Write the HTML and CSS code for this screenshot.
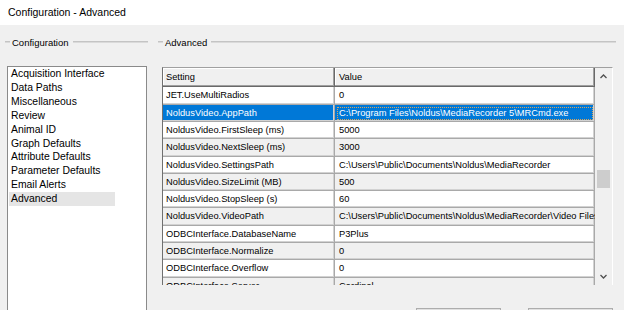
FILE: index.html
```html
<!DOCTYPE html>
<html lang="en">
<head>
  <meta charset="UTF-8" />
  <title>Configuration - Advanced</title>
  <link rel="stylesheet" href="styles.css">
</head>
<body>
  <div class="titlebar">Configuration - Advanced</div>
  <div class="main">
    <section class="group group-nav">
      <div class="group-head"><span>Configuration</span></div>
      <ul class="listbox">
        <li>Acquisition Interface</li>
        <li>Data Paths</li>
        <li>Miscellaneous</li>
        <li>Review</li>
        <li>Animal ID</li>
        <li>Graph Defaults</li>
        <li>Attribute Defaults</li>
        <li>Parameter Defaults</li>
        <li>Email Alerts</li>
        <li class="selected">Advanced</li>
      </ul>
    </section>

    <section class="group group-adv">
      <div class="group-head"><span>Advanced</span></div>
      <div class="grid">
        <div class="table">
          <div class="row head"><div class="cell">Setting</div><div class="cell">Value</div></div>
          <div class="row"><div class="cell">JET.UseMultiRadios</div><div class="cell">0</div></div>
          <div class="row sel"><div class="cell">NoldusVideo.AppPath</div><div class="cell focus">C:\Program Files\Noldus\MediaRecorder 5\MRCmd.exe</div></div>
          <div class="row"><div class="cell">NoldusVideo.FirstSleep (ms)</div><div class="cell">5000</div></div>
          <div class="row alt"><div class="cell">NoldusVideo.NextSleep (ms)</div><div class="cell">3000</div></div>
          <div class="row"><div class="cell">NoldusVideo.SettingsPath</div><div class="cell">C:\Users\Public\Documents\Noldus\MediaRecorder</div></div>
          <div class="row alt"><div class="cell">NoldusVideo.SizeLimit (MB)</div><div class="cell">500</div></div>
          <div class="row"><div class="cell">NoldusVideo.StopSleep (s)</div><div class="cell">60</div></div>
          <div class="row alt"><div class="cell">NoldusVideo.VideoPath</div><div class="cell">C:\Users\Public\Documents\Noldus\MediaRecorder\Video Files</div></div>
          <div class="row"><div class="cell">ODBCInterface.DatabaseName</div><div class="cell">P3Plus</div></div>
          <div class="row alt"><div class="cell">ODBCInterface.Normalize</div><div class="cell">0</div></div>
          <div class="row"><div class="cell">ODBCInterface.Overflow</div><div class="cell">0</div></div>
          <div class="row alt"><div class="cell">ODBCInterface.Server</div><div class="cell">Cardinal</div></div>
        </div>
        <div class="scrollbar">
          <div class="arrow">
            <svg width="7" height="5" viewBox="0 0 7 5"><polyline points="0.5,4 3.5,1 6.5,4" fill="none" stroke="#505050" stroke-width="1.3"/></svg>
          </div>
          <div class="track"><div class="thumb"></div></div>
          <div class="arrow">
            <svg width="7" height="5" viewBox="0 0 7 5"><polyline points="0.5,1 3.5,4 6.5,1" fill="none" stroke="#505050" stroke-width="1.3"/></svg>
          </div>
        </div>
      </div>
      <div class="buttons">
        <button class="btn">OK</button>
        <button class="btn">Cancel</button>
      </div>
    </section>
  </div>
</body>
</html>
```

FILE: styles.css
```css
html, body {
  margin: 0;
  width: 624px;
  height: 310px;
  overflow: hidden;
}
body {
  background: #f0f0f0;
  font-family: "Liberation Sans", Arial, sans-serif;
  color: #000;
}
.titlebar {
  height: 25px;
  line-height: 25px;
  padding-left: 8px;
  background: #fff;
  font-size: 10.5px;
}
.main {
  display: flex;
  gap: 10px;
  padding: 10px 8px 0 5px;
}
.group-nav {
  width: 143px;
}
.group-adv {
  flex: 1;
}
.group-head {
  display: flex;
  align-items: center;
  height: 14px;
  margin-bottom: 18px;
  font-size: 9.5px;
}
.group-head::before,
.group-head::after {
  content: "";
  height: 0;
  border-top: 1px solid #c4c4c4;
  border-bottom: 1px solid #dadada;
}
.group-head::before {
  width: 5px;
  margin-right: 2px;
}
.group-head::after {
  flex: 1;
  margin-left: 4px;
}
.listbox {
  list-style: none;
  margin: -1px 0 0 2px;
  padding: 0;
  width: 140px;
  height: 260px;
  box-sizing: border-box;
  background: #fff;
  border: 1px solid #8a8a8a;
  font-size: 10.4px;
}
.listbox li {
  line-height: 13.9px;
  margin-left: 1px;
  padding-left: 2px;
  width: 104px;
  white-space: nowrap;
}
.listbox li.selected {
  background: #e5e5e5;
}
.grid {
  display: flex;
  margin-left: 4px;
  width: 451px;
  height: 218px;
  overflow: hidden;
  box-sizing: border-box;
  border-top: 1px solid #a0a0a0;
  border-left: 1px solid #707070;
  border-right: 1px solid #fff;
}
.table {
  width: 432px;
  font-size: 9.3px;
}
.row {
  display: grid;
  grid-template-columns: 172px 260px;
  height: 17.32px;
  background: #fff;
}
.row.alt {
  background: #f0f0f0;
}
.cell {
  padding-left: 3px;
  line-height: 17.32px;
  white-space: nowrap;
  overflow: hidden;
  box-shadow: inset -1px -1px 0 #a9a9a9, inset -2px -2px 0 #d2d2d2;
}
.row .cell + .cell {
  padding-left: 4px;
}
.row.head {
  height: 19.3px;
  background: #f0f0f0;
}
.row.head .cell {
  line-height: 19.3px;
  box-shadow: inset -1px -1px 0 #696969, inset -2px -2px 0 #a0a0a0, inset 1px 1px 0 #fff;
}
.row.sel .cell {
  background: #0078d7;
  color: #fff;
}
.row.sel .cell.focus {
  outline: 1px dotted #d9a55b;
  outline-offset: -3px;
}
.scrollbar {
  display: flex;
  flex-direction: column;
  width: 17px;
  background: #f0f0f0;
}
.arrow {
  height: 17px;
  display: flex;
  align-items: center;
  justify-content: center;
}
.track {
  flex: 1;
}
.thumb {
  margin: 85px 0 0 2px;
  width: 13px;
  height: 18px;
  background: #cdcdcd;
}
.buttons {
  display: flex;
  justify-content: flex-end;
  gap: 27px;
  margin-top: 23px;
  padding-right: 3px;
}
.btn {
  width: 85px;
  height: 23px;
  border: 1px solid #adadad;
  background: #e1e1e1;
  font-family: "Liberation Sans", Arial, sans-serif;
  font-size: 10px;
}
```
